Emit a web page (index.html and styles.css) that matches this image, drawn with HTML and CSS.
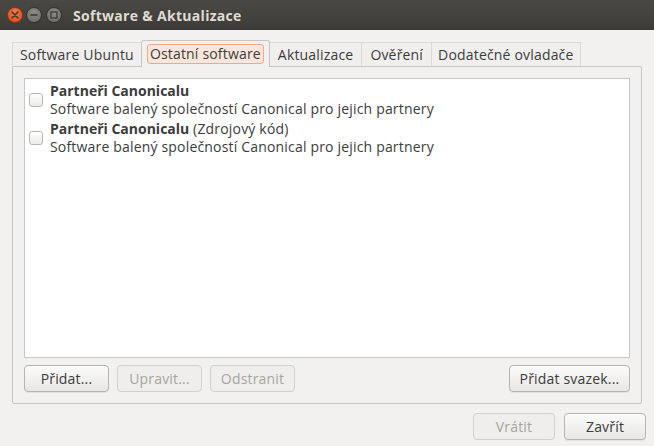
FILE: index.html
```html
<!DOCTYPE html>
<html lang="cs">
<head>
<meta charset="utf-8">
<title>Software &amp; Aktualizace</title>
<link rel="stylesheet" href="styles.css">
</head>
<body>
<div class="window">
  <div class="titlebar">
    <div class="wm-buttons">
      <span class="wm-btn wm-close">
        <svg width="8" height="8" viewBox="0 0 8 8"><path d="M1 1 L7 7 M7 1 L1 7" stroke="#3c3b37" stroke-width="1.6" stroke-linecap="round"/></svg>
      </span>
      <span class="wm-btn wm-min">
        <svg width="8" height="8" viewBox="0 0 8 8"><path d="M0.5 4 H7.5" stroke="#3c3b37" stroke-width="1.6"/></svg>
      </span>
      <span class="wm-btn wm-max">
        <svg width="8" height="8" viewBox="0 0 8 8"><rect x="1" y="1" width="6" height="6" fill="none" stroke="#3c3b37" stroke-width="1.3"/></svg>
      </span>
    </div>
    <div class="title">Software &amp; Aktualizace</div>
  </div>

  <div class="content">
    <div class="notebook">
      <div class="tabs">
        <div class="tab tab-first">Software Ubuntu</div>
        <div class="tab tab-active"><span class="focus">Ostatní software</span></div>
        <div class="tab">Aktualizace</div>
        <div class="tab">Ověření</div>
        <div class="tab tab-last">Dodatečné ovladače</div>
      </div>
      <div class="page">
        <div class="list">
          <div class="row">
            <span class="check"></span>
            <div class="row-text">
              <div class="line"><b>Partneři Canonicalu</b></div>
              <div class="line">Software balený společností Canonical pro jejich partnery</div>
            </div>
          </div>
          <div class="row">
            <span class="check"></span>
            <div class="row-text">
              <div class="line"><b>Partneři Canonicalu</b> (Zdrojový kód)</div>
              <div class="line">Software balený společností Canonical pro jejich partnery</div>
            </div>
          </div>
        </div>
        <div class="actions">
          <button class="btn">Přidat...</button>
          <button class="btn" disabled>Upravit...</button>
          <button class="btn" disabled>Odstranit</button>
          <span class="spacer"></span>
          <button class="btn btn-wide">Přidat svazek...</button>
        </div>
      </div>
    </div>
    <div class="dialog-actions">
      <button class="btn" disabled>Vrátit</button>
      <button class="btn">Zavřít</button>
    </div>
  </div>
</div>
</body>
</html>
```

FILE: styles.css
```css
* { box-sizing: border-box; }

html, body {
  margin: 0;
  padding: 0;
  background: #f2f1f0;
}

body {
  font-family: "Open Sans", "Noto Sans", sans-serif;
  font-size: 14px;
  letter-spacing: 0.18px;
  color: #3c3c3c;
}

.window {
  width: 654px;
  height: 446px;
  display: flex;
  flex-direction: column;
}

.titlebar {
  height: 30px;
  flex: none;
  background: linear-gradient(#4a4944, #3c3b37);
  display: flex;
  align-items: center;
  padding-left: 7px;
}

.wm-buttons {
  display: flex;
  gap: 3px;
  align-items: center;
}

.wm-btn {
  width: 16px;
  height: 16px;
  border-radius: 50%;
  display: flex;
  align-items: center;
  justify-content: center;
}

.wm-close {
  background: radial-gradient(circle at 50% 35%, #f47a4a, #de4815);
  border: 1px solid #8e3513;
}

.wm-min, .wm-max {
  background: radial-gradient(circle at 50% 35%, #8c8b86, #6a6964);
  border: 1px solid #33322e;
}

.wm-max { margin-left: 1px; }

.title {
  margin-left: 11px;
  font-weight: bold;
  font-size: 14px;
  letter-spacing: 0.3px;
  color: #dfdbd2;
}

.content {
  flex: 1;
  display: flex;
  flex-direction: column;
  padding: 10px 8px 0 12px;
}

.notebook {
  width: 630px;
  display: flex;
  flex-direction: column;
}

.tabs {
  display: flex;
  align-items: flex-end;
  height: 26px;
  position: relative;
  z-index: 1;
}

.tab {
  height: 24px;
  padding: 0 8px;
  display: flex;
  align-items: center;
  border-top: 1px solid #dcdad6;
  border-right: 1px solid #dcdad6;
  background: #f0efee;
  color: #3c3c3c;
  white-space: nowrap;
}

.tab-first {
  border-left: 1px solid #dcdad6;
  padding: 0 7px;
}

.tab-last {
  padding: 0 6px;
}

.tab-active {
  height: 27px;
  margin-bottom: -1px;
  padding: 0 5px 1px;
  background: #f2f1f0;
  border: 1px solid #c8c6c2;
  border-bottom: none;
  border-radius: 3px 3px 0 0;
  margin-left: -1px;
}

.focus {
  border: 1px solid #f3a88a;
  background: #fbe6dd;
  border-radius: 3px;
  padding: 0 2px;
  line-height: 18px;
}

.page {
  border: 1px solid #c8c6c2;
  border-radius: 0 2px 2px 2px;
  height: 338px;
  padding: 11px 11px 11px;
  display: flex;
  flex-direction: column;
}

.list {
  height: 280px;
  background: #ffffff;
  border: 1px solid #c8c8c8;
  padding: 2px 0 0 4px;
}

.row {
  display: flex;
  align-items: center;
  height: 38px;
}

.check {
  width: 14px;
  height: 14px;
  border: 1px solid #b9b7b3;
  border-radius: 3px;
  background: linear-gradient(#ffffff, #ecebe9);
  margin-right: 7px;
  flex: none;
}

.line {
  line-height: 18px;
  white-space: nowrap;
}

.line b { font-weight: bold; letter-spacing: 0; }

.actions {
  margin-top: 7px;
  display: flex;
  gap: 8px;
}

.spacer { flex: 1; }

.btn {
  font-family: inherit;
  font-size: 14px;
  letter-spacing: 0.18px;
  height: 27px;
  min-width: 85px;
  padding: 0 9px;
  color: #3c3c3c;
  background: linear-gradient(#fbfbfa, #e8e7e5);
  border: 1px solid #b7b4b0;
  border-radius: 4px;
  box-shadow: 0 1px 0 rgba(0,0,0,0.06);
}

.btn:disabled {
  color: #a7a5a1;
  background: #efeeec;
  border-color: #d3d1cd;
  box-shadow: none;
}

.btn-wide { min-width: 121px; }

.dialog-actions {
  margin-top: 9px;
  display: flex;
  justify-content: flex-end;
  gap: 9px;
}

.dialog-actions .btn { min-width: 82px; }
```
